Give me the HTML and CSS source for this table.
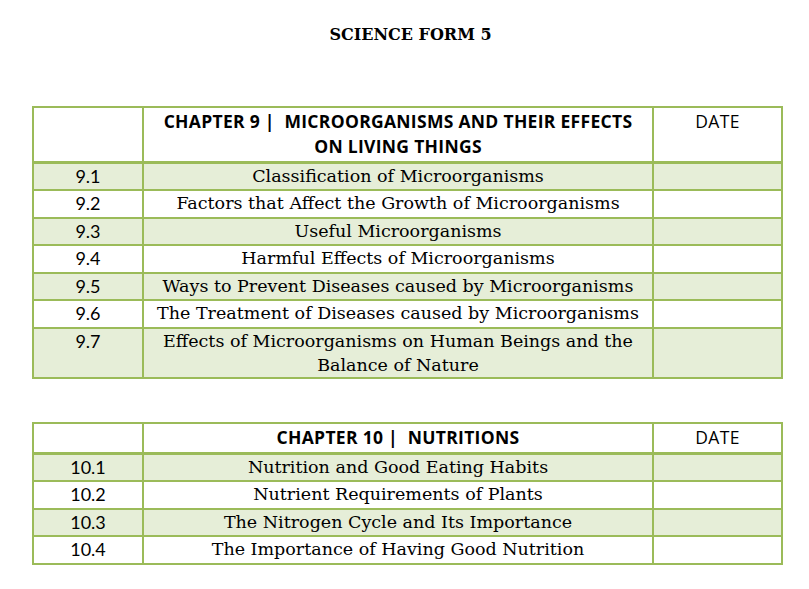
FILE: index.html
```html
<!DOCTYPE html>
<html>
<head>
<meta charset="utf-8">
<link rel="stylesheet" href="styles.css">
</head>
<body>
<h1 class="title">SCIENCE FORM 5</h1>

<table class="chapter chapter-9">
  <colgroup><col class="c-num"><col class="c-topic"><col class="c-date"></colgroup>
  <thead>
    <tr class="head">
      <th></th>
      <th class="h-topic">CHAPTER 9 |&nbsp; MICROORGANISMS AND THEIR EFFECTS<br>ON LIVING THINGS</th>
      <th class="h-date">DATE</th>
    </tr>
  </thead>
  <tbody>
    <tr class="shade"><td class="num">9.1</td><td class="topic">Classification of Microorganisms</td><td></td></tr>
    <tr><td class="num">9.2</td><td class="topic">Factors that Affect the Growth of Microorganisms</td><td></td></tr>
    <tr class="shade"><td class="num">9.3</td><td class="topic">Useful Microorganisms</td><td></td></tr>
    <tr><td class="num">9.4</td><td class="topic">Harmful Effects of Microorganisms</td><td></td></tr>
    <tr class="shade"><td class="num">9.5</td><td class="topic">Ways to Prevent Diseases caused by Microorganisms</td><td></td></tr>
    <tr><td class="num">9.6</td><td class="topic">The Treatment of Diseases caused by Microorganisms</td><td></td></tr>
    <tr class="shade tall"><td class="num">9.7</td><td class="topic">Effects of Microorganisms on Human Beings and the<br>Balance of Nature</td><td></td></tr>
  </tbody>
</table>

<table class="chapter chapter-10">
  <colgroup><col class="c-num"><col class="c-topic"><col class="c-date"></colgroup>
  <thead>
    <tr class="head">
      <th></th>
      <th class="h-topic">CHAPTER 10 |&nbsp; NUTRITIONS</th>
      <th class="h-date">DATE</th>
    </tr>
  </thead>
  <tbody>
    <tr class="shade"><td class="num">10.1</td><td class="topic">Nutrition and Good Eating Habits</td><td></td></tr>
    <tr><td class="num">10.2</td><td class="topic">Nutrient Requirements of Plants</td><td></td></tr>
    <tr class="shade"><td class="num">10.3</td><td class="topic">The Nitrogen Cycle and Its Importance</td><td></td></tr>
    <tr><td class="num">10.4</td><td class="topic">The Importance of Having Good Nutrition</td><td></td></tr>
  </tbody>
</table>
</body>
</html>
```

FILE: styles.css
```css
html, body {
  margin: 0;
  padding: 0;
  background: #ffffff;
}

body {
  color: #000000;
  font-family: "DejaVu Serif", "Liberation Serif", serif;
}

.title {
  margin: 0;
  padding-top: 24px;
  padding-left: 12px;
  height: 22px;
  text-align: center;
  font-family: "DejaVu Serif", "Liberation Serif", serif;
  font-size: 16px;
  font-weight: bold;
  line-height: 22px;
}

.chapter {
  border-collapse: collapse;
  table-layout: fixed;
  width: 749px;
  margin-left: 32px;
}

.chapter-9 {
  margin-top: 60px;
}

.chapter-10 {
  margin-top: 43px;
}

.c-num { width: 110px; }
.c-topic { width: 510px; }
.c-date { width: 129px; }

.chapter th,
.chapter td {
  border: 2px solid #9bbb59;
  padding: 0;
}

.head th {
  border-bottom-width: 3px;
  vertical-align: top;
  font-family: "Open Sans", Lato, sans-serif;
  font-size: 17.5px;
  letter-spacing: 0.3px;
  line-height: 25px;
  padding-top: 1px;
  padding-bottom: 1px;
  text-align: center;
}

.chapter-9 .head th {
  height: 51px;
}

.chapter-10 .head th {
  height: 26px;
}

.h-topic {
  font-weight: bold;
}

.h-date {
  font-weight: normal;
  letter-spacing: 0;
}

tbody tr {
  height: 27.6px;
}

tbody tr.tall {
  height: 50px;
}

.shade td {
  background: #e6eed8;
}

.num {
  text-align: center;
  vertical-align: top;
  font-family: Lato, "Open Sans", sans-serif;
  font-size: 18px;
  line-height: 24px;
  padding-top: 1px;
}

.topic {
  text-align: center;
  vertical-align: top;
  font-size: 17.5px;
  line-height: 24px;
  padding-top: 1px;
}
```
